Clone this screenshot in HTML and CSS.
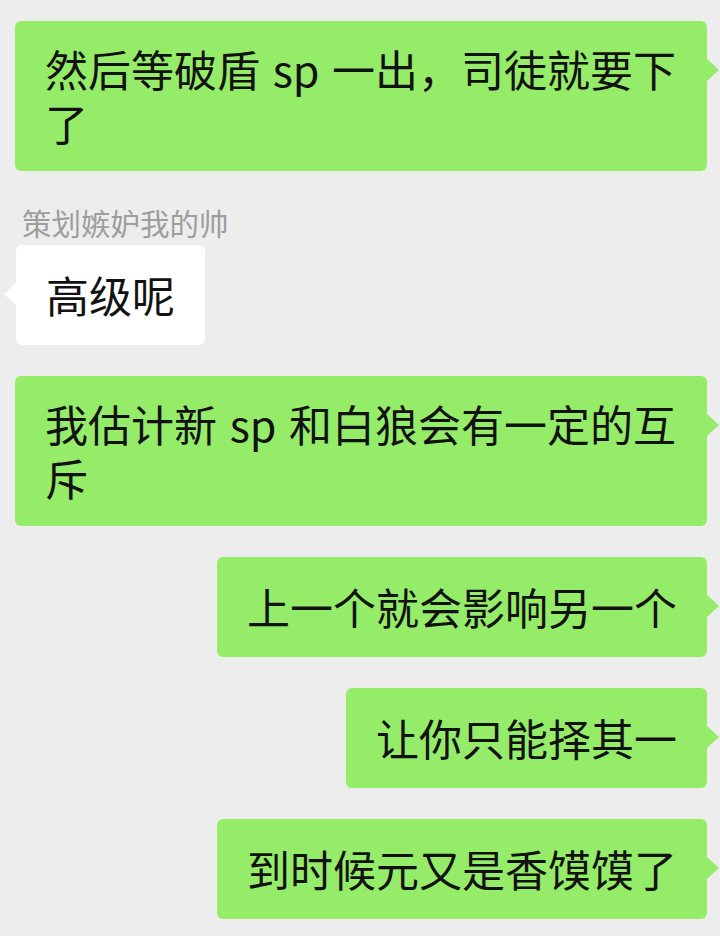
FILE: index.html
```html
<!DOCTYPE html>
<html lang="zh-CN">
<head>
  <meta charset="UTF-8">
  <meta name="viewport" content="width=device-width, initial-scale=1.0">
  <title>聊天</title>
  <link rel="stylesheet" href="styles.css">
</head>
<body>
  <div class="chat">
    <div class="msg mine">
      <div class="bubble">然后等破盾 sp 一出，司徒就要下了</div>
    </div>

    <div class="msg theirs">
      <div class="name">策划嫉妒我的帅</div>
      <div class="bubble">高级呢</div>
    </div>

    <div class="msg mine">
      <div class="bubble">我估计新 sp 和白狼会有一定的互斥</div>
    </div>

    <div class="msg mine">
      <div class="bubble">上一个就会影响另一个</div>
    </div>

    <div class="msg mine">
      <div class="bubble">让你只能择其一</div>
    </div>

    <div class="msg mine">
      <div class="bubble">到时候元又是香馍馍了</div>
    </div>
  </div>
</body>
</html>
```

FILE: styles.css
```css
body {
  margin: 0;
  background-color: #ededed;
  font-family: "Noto Sans CJK SC", "Noto Sans", sans-serif;
  width: 720px;
  height: 936px;
  overflow: hidden;
}

.chat {
  display: flex;
  flex-direction: column;
  gap: 31px;
  padding: 21px 13px 0 15px;
}

.msg {
  display: flex;
}

.msg.mine {
  justify-content: flex-end;
}

.msg.theirs {
  flex-direction: column;
  align-items: flex-start;
  padding-left: 1px;
}

.name {
  margin: 3px 0 6px 6px;
  font-size: 29.5px;
  line-height: 34px;
  color: #9d9d9d;
}

.bubble {
  position: relative;
  box-sizing: border-box;
  min-height: 100px;
  padding: 20px 30px 22px;
  border-radius: 6px;
  font-size: 43px;
  line-height: 54px;
  color: #121212;
  word-spacing: 3px;
  display: flex;
  align-items: center;
}

.mine .bubble {
  background-color: #95ec69;
}

.theirs .bubble {
  background-color: #ffffff;
}

/* little tail pointing at the avatar */
.bubble::after {
  content: "";
  position: absolute;
  top: 38px;
  width: 0;
  height: 0;
  border-top: 11px solid transparent;
  border-bottom: 11px solid transparent;
}

.mine .bubble::after {
  right: -12px;
  border-left: 12px solid #95ec69;
}

.theirs .bubble::after {
  left: -12px;
  border-right: 12px solid #ffffff;
}
```
